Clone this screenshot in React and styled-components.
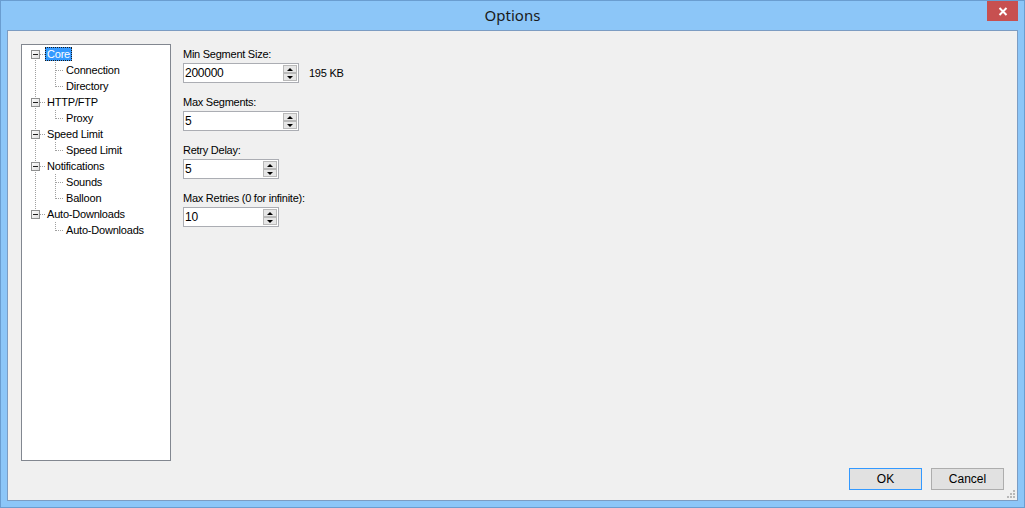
import * as React from 'react';
import styled, { createGlobalStyle } from 'styled-components';

const GlobalStyle = createGlobalStyle`
    html, body {
        margin: 0;
        padding: 0;
        background: #fff;
    }
    body {
        font-family: "Liberation Sans", Arial, sans-serif;
        font-size: 11px;
        color: #000;
    }
`;

const Window = styled.div`
    width: 1025px;
    height: 508px;
    box-sizing: border-box;
    border: 1px solid #6a9dd0;
    background: #8cc6f8;
    padding: 0 6px 6px;
    display: flex;
    flex-direction: column;
`;

const TitleBar = styled.div`
    position: relative;
    height: 29px;
    flex: 0 0 29px;
    display: flex;
    align-items: center;
    justify-content: center;
    font-family: "Noto Sans", "Open Sans", sans-serif;
    font-size: 15px;
    color: #1a1a1a;
    padding-bottom: 1px;
    box-sizing: border-box;
`;

const CloseButton = styled.div`
    position: absolute;
    top: 0;
    right: 0;
    width: 31px;
    height: 20px;
    background: #c75050;
    display: flex;
    align-items: center;
    justify-content: center;
`;

const Client = styled.div`
    position: relative;
    flex: 1;
    border: 1px solid #7c9cc2;
    background: #f0f0f0;
    padding: 13px 13px 10px;
    display: flex;
    flex-direction: column;
    gap: 7px;
`;

const Body = styled.div`
    flex: 1;
    display: flex;
    gap: 12px;
    min-height: 0;
`;

const TreePanel = styled.div`
    flex: 0 0 150px;
    box-sizing: border-box;
    border: 1px solid #828790;
    background: #fff;
    padding-top: 1px;
    display: flex;
    flex-direction: column;
`;

const TreeRow = styled.div`
    height: 16px;
    display: flex;
    align-items: center;
    svg {
        display: block;
        flex: 0 0 auto;
    }
`;

const TreeLabel = styled.span`
    height: 14px;
    line-height: 12px;
    box-sizing: border-box;
    padding: 0 1px;
    letter-spacing: -0.2px;
    border: 1px dotted ${p => (p.selected ? '#1b1b1b' : 'transparent')};
    background: ${p => (p.selected ? '#3399ff' : 'transparent')};
    color: ${p => (p.selected ? '#fff' : '#000')};
    white-space: nowrap;
`;

const Settings = styled.div`
    display: flex;
    flex-direction: column;
    padding-top: 3px;
    letter-spacing: -0.25px;
`;

const Field = styled.div`
    display: flex;
    flex-direction: column;
    gap: 2px;
    margin-bottom: 12px;
`;

const Label = styled.div`
    height: 14px;
    line-height: 15px;
`;

const FieldRow = styled.div`
    display: flex;
    align-items: center;
    gap: 10px;
`;

const Spin = styled.div`
    width: ${p => p.width}px;
    height: 20px;
    box-sizing: border-box;
    border: 1px solid #abadb3;
    background: #fff;
    display: flex;
`;

const SpinValue = styled.div`
    flex: 1;
    padding-left: 1px;
    line-height: 18px;
    font-size: 12px;
`;

const SpinButtons = styled.div`
    width: 14px;
    margin: 1px 1px 1px 0;
    display: flex;
    flex-direction: column;
`;

const SpinButton = styled.div`
    flex: 1;
    box-sizing: border-box;
    border: 1px solid #b9b9b9;
    background: #e6e6e6;
    display: flex;
    align-items: center;
    justify-content: center;
    &::after {
        content: '';
        width: 0;
        height: 0;
        border-left: 3px solid transparent;
        border-right: 3px solid transparent;
        ${p => (p.down ? 'border-top: 3px solid #000;' : 'border-bottom: 3px solid #000;')}
    }
`;

const Footer = styled.div`
    display: flex;
    justify-content: flex-end;
    gap: 9px;
`;

const Button = styled.div`
    width: 73px;
    height: 22px;
    box-sizing: border-box;
    border: 1px solid ${p => (p.primary ? '#3399ff' : '#adadad')};
    background: #e1e1e1;
    display: flex;
    align-items: center;
    justify-content: center;
    font-size: 12px;
`;

const Grip = styled.svg`
    position: absolute;
    right: 1px;
    bottom: 1px;
`;

const tree = [
    { label: 'Core', children: ['Connection', 'Directory'] },
    { label: 'HTTP/FTP', children: ['Proxy'] },
    { label: 'Speed Limit', children: ['Speed Limit'] },
    { label: 'Notifications', children: ['Sounds', 'Balloon'] },
    { label: 'Auto-Downloads', children: ['Auto-Downloads'] },
];

const dot = { stroke: '#a0a0a0', strokeDasharray: '1 1', shapeRendering: 'crispEdges' };

function RootGuide({ first, last }) {
    return (
        <svg width="23" height="16">
            <line x1="13.5" y1={first ? 8 : 0} x2="13.5" y2={last ? 8 : 16} style={dot} />
            <line x1="18" y1="8.5" x2="23" y2="8.5" style={dot} />
            <defs>
                <linearGradient id="bx" x1="0" y1="0" x2="1" y2="1">
                    <stop offset="0" stopColor="#ffffff" />
                    <stop offset="1" stopColor="#dcdcdc" />
                </linearGradient>
            </defs>
            <rect x="9.5" y="4.5" width="8" height="8" fill="url(#bx)" stroke="#8e8f8f" shapeRendering="crispEdges" />
            <line x1="11" y1="8.5" x2="16" y2="8.5" stroke="#1f1f1f" shapeRendering="crispEdges" />
        </svg>
    );
}

function ChildGuide({ parentLast, last }) {
    return (
        <svg width="42" height="16">
            {!parentLast && <line x1="13.5" y1="0" x2="13.5" y2="16" style={dot} />}
            <line x1="33.5" y1="0" x2="33.5" y2={last ? 9 : 16} style={dot} />
            <line x1="34" y1="8.5" x2="42" y2="8.5" style={dot} />
        </svg>
    );
}

function NumberBox({ value, width }) {
    return (
        <Spin width={width}>
            <SpinValue>{value}</SpinValue>
            <SpinButtons>
                <SpinButton />
                <SpinButton down />
            </SpinButtons>
        </Spin>
    );
}

export default function App() {
    return (
        <>
            <GlobalStyle />
            <Window>
                <TitleBar>
                    Options
                    <CloseButton>
                        <svg width="10" height="9" viewBox="0 0 10 9">
                            <path d="M1.5 1 L8.5 8 M8.5 1 L1.5 8" stroke="#fff" strokeWidth="2" />
                        </svg>
                    </CloseButton>
                </TitleBar>
                <Client>
                    <Body>
                        <TreePanel>
                            {tree.map((node, i) => (
                                <React.Fragment key={node.label}>
                                    <TreeRow>
                                        <RootGuide first={i === 0} last={i === tree.length - 1} />
                                        <TreeLabel selected={i === 0}>{node.label}</TreeLabel>
                                    </TreeRow>
                                    {node.children.map((child, j) => (
                                        <TreeRow key={child + j}>
                                            <ChildGuide
                                                parentLast={i === tree.length - 1}
                                                last={j === node.children.length - 1}
                                            />
                                            <TreeLabel>{child}</TreeLabel>
                                        </TreeRow>
                                    ))}
                                </React.Fragment>
                            ))}
                        </TreePanel>
                        <Settings>
                            <Field>
                                <Label>Min Segment Size:</Label>
                                <FieldRow>
                                    <NumberBox value="200000" width={116} />
                                    <span>195 KB</span>
                                </FieldRow>
                            </Field>
                            <Field>
                                <Label>Max Segments:</Label>
                                <NumberBox value="5" width={116} />
                            </Field>
                            <Field>
                                <Label>Retry Delay:</Label>
                                <NumberBox value="5" width={96} />
                            </Field>
                            <Field>
                                <Label>Max Retries (0 for infinite):</Label>
                                <NumberBox value="10" width={96} />
                            </Field>
                        </Settings>
                    </Body>
                    <Footer>
                        <Button primary>OK</Button>
                        <Button>Cancel</Button>
                    </Footer>
                    <Grip width="10" height="10">
                        <g fill="#b8b8b8">
                            <rect x="7" y="1" width="2" height="2" />
                            <rect x="4" y="4" width="2" height="2" />
                            <rect x="7" y="4" width="2" height="2" />
                            <rect x="1" y="7" width="2" height="2" />
                            <rect x="4" y="7" width="2" height="2" />
                            <rect x="7" y="7" width="2" height="2" />
                        </g>
                    </Grip>
                </Client>
            </Window>
        </>
    );
}
